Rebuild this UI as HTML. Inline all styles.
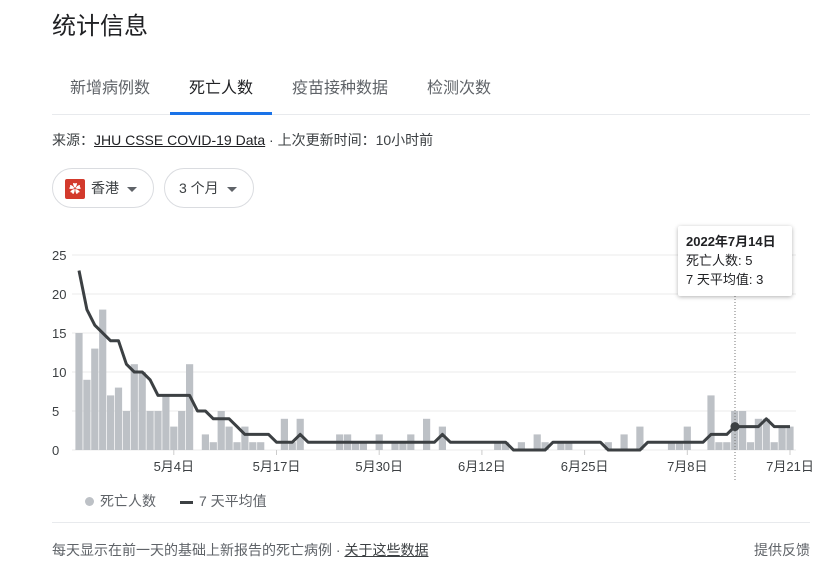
<!DOCTYPE html>
<html><head><meta charset="utf-8"><style>
body{margin:0;width:830px;height:584px;background:#fff;font-family:"Liberation Sans","Noto Sans CJK SC",sans-serif;position:relative;overflow:hidden;color:#202124}
.a{position:absolute;white-space:nowrap}
.tab{font-size:16px;color:#5f6368;top:74px}
.chip{position:absolute;top:168px;height:40px;border:1px solid #dadce0;border-radius:21px;box-sizing:border-box;font-size:14px;color:#3c4043;line-height:38px}
.car{display:inline-block;width:0;height:0;border-left:5px solid transparent;border-right:5px solid transparent;border-top:5px solid #5f6368;vertical-align:middle;margin-left:8px}
</style></head><body>
<div class="a" style="left:52px;top:6px;font-size:24px;color:#202124">统计信息</div>
<div class="a tab" style="left:70px">新增病例数</div>
<div class="a tab" style="left:189px;color:#202124">死亡人数</div>
<div class="a tab" style="left:292px">疫苗接种数据</div>
<div class="a tab" style="left:427px">检测次数</div>
<div class="a" style="left:52px;top:114px;width:758px;height:1px;background:#e8eaed"></div>
<div class="a" style="left:170px;top:112px;width:102px;height:3px;background:#1a73e8"></div>
<div class="a" style="left:52px;top:130px;font-size:14px;color:#3c4043">来源：<span style="text-decoration:underline;color:#202124">JHU CSSE COVID-19 Data</span> · 上次更新时间：10小时前</div>
<div class="chip" style="left:52px;width:102px;padding-left:12px"><span style="display:inline-block;width:20px;height:20px;background:#d33a2c;border-radius:2px;vertical-align:middle;color:#fff;font-size:12px;line-height:20px;text-align:center;margin-right:6px">✿</span>香港<span class="car"></span></div>
<div class="chip" style="left:164px;width:90px;padding-left:14px">3 个月<span class="car"></span></div>
<svg class="a" style="left:0;top:0" width="830" height="584" id="ch"></svg>
<div class="a" style="left:678px;top:226px;width:114px;height:70px;background:#fff;box-shadow:0 1px 4px rgba(0,0,0,.3);border-radius:2px;font-size:13px;line-height:19px;padding:6px 0 0 8px;box-sizing:border-box;color:#202124"><b>2022年7月14日</b><br>死亡人数: 5<br>7 天平均值: 3</div>
<div class="a" style="left:85px;top:491px;font-size:14px;color:#5f6368"><span style="display:inline-block;width:9px;height:9px;border-radius:50%;background:#bdc1c6;margin-right:6px"></span>死亡人数</div>
<div class="a" style="left:180px;top:491px;font-size:14px;color:#5f6368"><span style="display:inline-block;width:13px;height:3px;background:#3c4043;vertical-align:middle;margin-right:6px"></span>7 天平均值</div>
<div class="a" style="left:52px;top:522px;width:758px;height:1px;background:#e8eaed"></div>
<div class="a" style="left:52px;top:540px;font-size:14px;color:#5f6368">每天显示在前一天的基础上新报告的死亡病例 · <span style="text-decoration:underline;color:#3c4043">关于这些数据</span></div>
<div class="a" style="left:754px;top:540px;font-size:14px;color:#5f6368">提供反馈</div>
<script>
var b=[15,9,13,18,7,8,5,11,10,5,5,7,3,5,11,0,2,1,5,3,1,3,1,1,0,0,4,1,4,0,0,0,0,2,2,1,1,0,2,0,1,1,2,0,4,0,3,0,0,0,0,0,0,1,1,0,1,0,2,1,0,1,1,0,0,0,0,1,0,2,0,3,0,0,0,1,1,3,0,0,7,1,1,5,5,1,4,4,1,3,3];
var av=[23,18,16,15,14,14,11,10,10,9,7,7,7,7,7,5,5,4,4,4,3,2,2,2,2,1,1,1,2,1,1,1,1,1,1,1,1,1,1,1,1,1,1,1,1,1,2,1,1,1,1,1,1,1,1,0,0,0,0,0,1,1,1,1,1,1,1,0,0,0,0,0,1,1,1,1,1,1,1,1,2,2,2,3,3,3,3,4,3,3,3];
var s='';var Y=function(v){return 450-7.8*v};
for(var k=0;k<=5;k++){var y=450-39*k;s+='<line x1="72" x2="796" y1="'+y+'" y2="'+y+'" stroke="#ebebeb"/><text x="52" y="'+(y+5)+'" font-size="13" fill="#3c4043" font-family="Liberation Sans">'+(k*5)+'</text>';}
for(var i=0;i<b.length;i++){var c=79+7.9*i;if(b[i])s+='<rect x="'+(c-3.6)+'" y="'+Y(b[i])+'" width="7.2" height="'+(7.8*b[i])+'" fill="#bdc1c6"/>';}
var ticks=[[12,'5月4日'],[25,'5月17日'],[38,'5月30日'],[51,'6月12日'],[64,'6月25日'],[77,'7月8日'],[90,'7月21日']];
ticks.forEach(function(t){var c=79+7.9*t[0];s+='<line x1="'+c+'" x2="'+c+'" y1="450" y2="455" stroke="#ccc"/><text x="'+c+'" y="471" text-anchor="middle" font-size="13" fill="#3c4043" font-family="Liberation Sans,Noto Sans CJK SC">'+t[1]+'</text>';});
var p='';for(var i=0;i<av.length;i++)p+=(79+7.9*i)+','+Y(av[i])+' ';
s+='<line x1="735" x2="735" y1="296" y2="482" stroke="#777" stroke-dasharray="1,2"/>';
s+='<polyline points="'+p+'" fill="none" stroke="#3c4043" stroke-width="3" stroke-linejoin="round"/>';
s+='<circle cx="735" cy="'+Y(3)+'" r="4.5" fill="#3c4043"/>';
document.getElementById('ch').innerHTML=s;
</script>
</body></html>
